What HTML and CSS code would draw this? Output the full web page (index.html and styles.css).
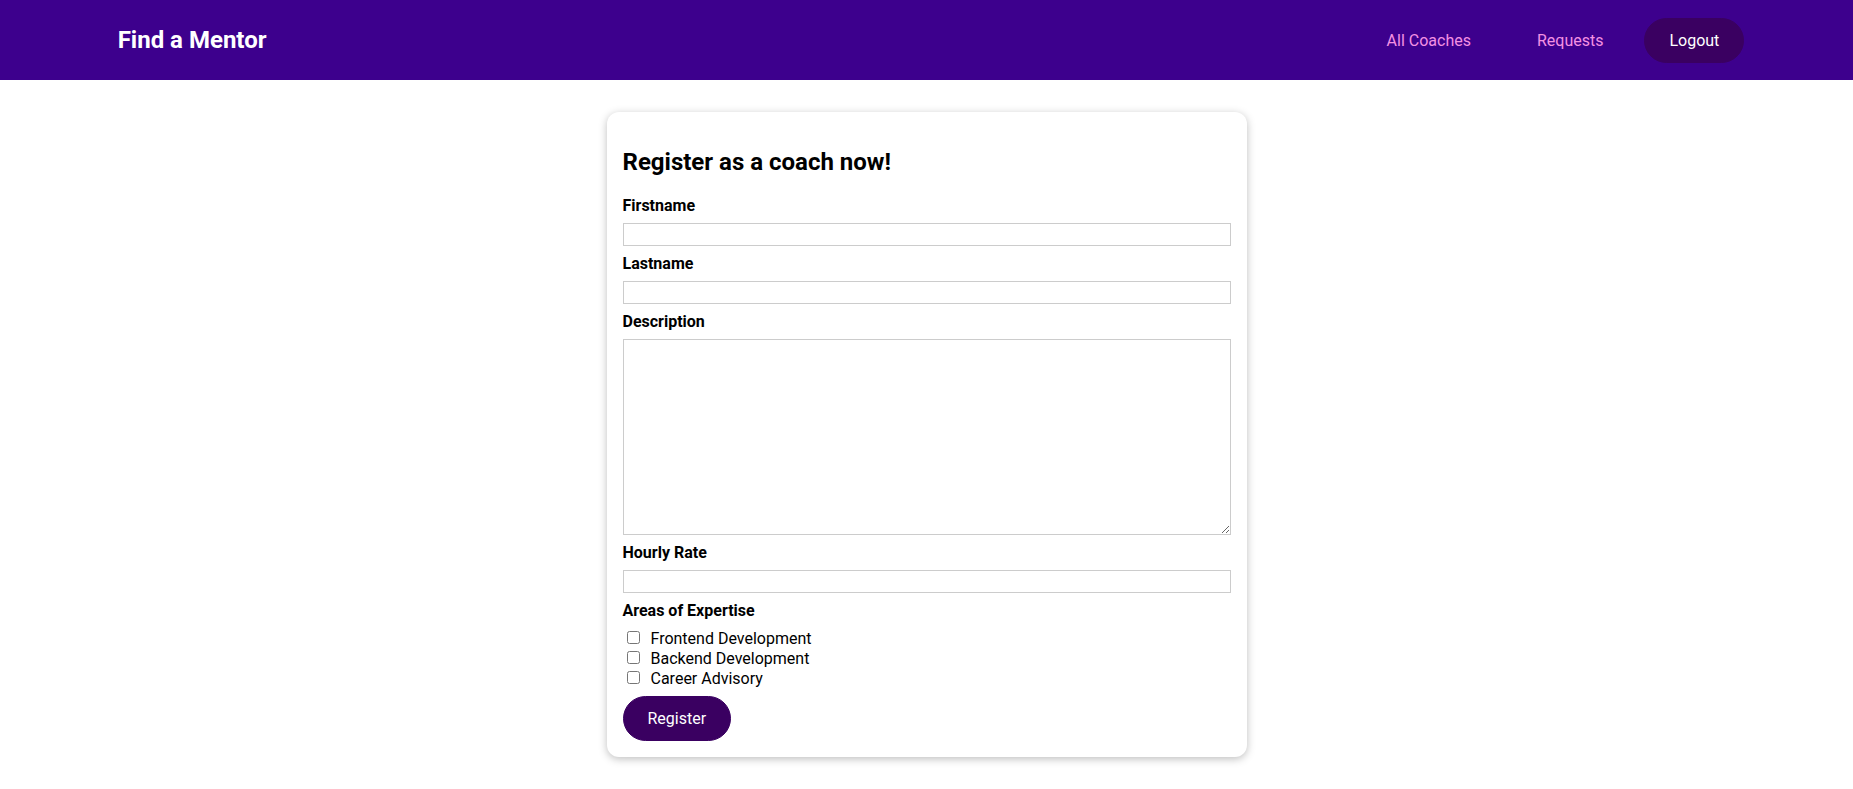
FILE: index.html
```html
<!DOCTYPE html>
<html lang="en">
<head>
<meta charset="utf-8">
<title>Find a Mentor</title>
<link rel="stylesheet" href="styles.css">
</head>
<body>
<header class="site-header">
  <nav class="site-nav">
    <h1 class="brand"><a href="#" class="brand-link">Find a Mentor</a></h1>
    <ul class="nav-list">
      <li class="nav-item"><a href="#" class="nav-link">All Coaches</a></li>
      <li class="nav-item"><a href="#" class="nav-link">Requests</a></li>
      <li class="nav-item"><a href="#" class="nav-button">Logout</a></li>
    </ul>
  </nav>
</header>
<main>
  <section class="card">
    <h2 class="card-title">Register as a coach now!</h2>
    <form class="coach-form">
      <div class="form-control">
        <label class="field-label" for="firstname">Firstname</label>
        <input class="field-input" type="text" id="firstname">
      </div>
      <div class="form-control">
        <label class="field-label" for="lastname">Lastname</label>
        <input class="field-input" type="text" id="lastname">
      </div>
      <div class="form-control">
        <label class="field-label" for="description">Description</label>
        <textarea class="field-input" id="description" rows="10"></textarea>
      </div>
      <div class="form-control">
        <label class="field-label" for="rate">Hourly Rate</label>
        <input class="field-input" type="number" id="rate">
      </div>
      <div class="form-control">
        <h3 class="field-label">Areas of Expertise</h3>
        <div class="check-row"><input class="check-box" type="checkbox" id="frontend" value="frontend"><label class="check-label" for="frontend">Frontend Development</label></div>
        <div class="check-row"><input class="check-box" type="checkbox" id="backend" value="backend"><label class="check-label" for="backend">Backend Development</label></div>
        <div class="check-row"><input class="check-box" type="checkbox" id="career" value="career"><label class="check-label" for="career">Career Advisory</label></div>
      </div>
      <button class="submit-button" type="button">Register</button>
    </form>
  </section>
</main>
</body>
</html>
```

FILE: styles.css
```css
* {
  box-sizing: border-box;
}

html {
  font-family: "Roboto", "Noto Sans", sans-serif;
}

body {
  margin: 0;
  color: #000;
  background: #fff;
}

.site-header {
  width: 100%;
  height: 5rem;
  background-color: #3d008d;
  display: flex;
  justify-content: center;
  align-items: center;
}

.site-nav {
  width: 90%;
  margin: auto;
  display: flex;
  justify-content: space-between;
  align-items: center;
}

.brand {
  margin: 0;
  font-size: 1.5rem;
}

.brand-link {
  color: #fff;
  text-decoration: none;
  display: inline-block;
  padding: 0.75rem 1.5rem;
  border: 1px solid transparent;
}

.nav-list {
  list-style: none;
  margin: 0 8px 0 0;
  padding: 0;
  display: flex;
  justify-content: center;
  align-items: center;
}

.nav-item {
  margin: 0 0.5rem;
}

.nav-link {
  text-decoration: none;
  color: #f391e3;
  display: inline-block;
  padding: 0.75rem 1.5rem;
  border: 1px solid transparent;
}

.nav-button {
  text-decoration: none;
  color: #fff;
  display: inline-block;
  padding: 0.75rem 1.5rem;
  border: 1px solid #3a0061;
  background-color: #3a0061;
  border-radius: 30px;
}

.card {
  max-width: 40rem;
  margin: 2rem auto;
  padding: 1rem;
  border-radius: 12px;
  box-shadow: 0 2px 8px rgba(0, 0, 0, 0.26);
}

.card-title {
  font-size: 1.5rem;
  margin: 0.83em 0;
}

.coach-form {
  margin: 0;
}

.form-control {
  margin: 0.5rem 0;
}

.field-label {
  font-weight: bold;
  display: block;
  margin: 0 0 0.5rem 0;
  font-size: 1rem;
}

.field-input {
  display: block;
  width: 100%;
  border: 1px solid #ccc;
  font: inherit;
  margin: 0;
}

.check-row {
  margin: 0;
}

.check-box {
  display: inline;
  width: auto;
  border: none;
  margin: 3px 3px 3px 4px;
}

.check-label {
  font-weight: normal;
  display: inline;
  margin: 0 0 0 0.5rem;
}

.submit-button {
  text-decoration: none;
  padding: 0.75rem 1.5rem;
  font: inherit;
  background-color: #3a0061;
  border: 1px solid #3a0061;
  color: #fff;
  cursor: pointer;
  border-radius: 30px;
  display: inline-block;
}
```
